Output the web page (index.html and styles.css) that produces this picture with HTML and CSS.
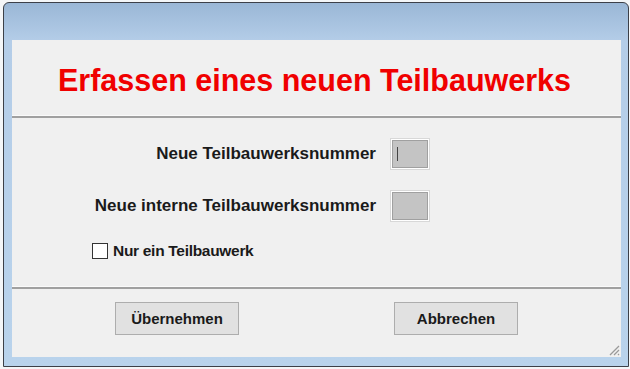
FILE: index.html
```html
<!DOCTYPE html>
<html lang="de">
<head>
  <meta charset="UTF-8" />
  <title>Erfassen eines neuen Teilbauwerks</title>
  <link rel="stylesheet" href="styles.css">
</head>
<body>
  <div class="window">
    <div class="client">
      <div class="header">
        <h1>Erfassen eines neuen Teilbauwerks</h1>
      </div>
      <div class="separator"></div>

      <div class="form">
        <div class="row">
          <label for="nr">Neue Teilbauwerksnummer</label>
          <div class="field"><input type="text" id="nr" /><span class="caret"></span></div>
        </div>
        <div class="row">
          <label for="intnr">Neue interne Teilbauwerksnummer</label>
          <div class="field"><input type="text" id="intnr" /></div>
        </div>
        <div class="check">
          <span class="box"></span>
          <span>Nur ein Teilbauwerk</span>
        </div>
      </div>

      <div class="separator"></div>
      <div class="buttons">
        <button class="btn">Übernehmen</button>
        <button class="btn">Abbrechen</button>
      </div>

      <svg class="grip" width="12" height="12" viewBox="0 0 12 12">
        <path d="M11 2 L2 11 M11 6 L6 11 M11 10 L10 11" stroke="#9a9a9a" stroke-width="1.3" />
      </svg>
    </div>
  </div>
</body>
</html>
```

FILE: styles.css
```css
body {
  margin: 0;
  background: #f4f6f8;
  font-family: 'Liberation Sans', Arial, sans-serif;
}
.window {
  margin: 2px 1px 0 3px;
  height: 365px;
  box-sizing: border-box;
  border: 1px solid #3c4048;
  border-radius: 6px 6px 0 0;
  background: linear-gradient(#9ab7d6, #b4cde8 38px, #b9d3ec);
  padding: 37px 7px 9px 8px;
}
.client {
  position: relative;
  height: 317px;
  background: #f0f0f0;
  display: flex;
  flex-direction: column;
}
.header {
  height: 75px;
  display: flex;
  align-items: center;
  justify-content: center;
}
h1 {
  margin: 0 0 0 -4px;
  color: #f00000;
  font-size: 30.5px;
  font-weight: bold;
  padding-top: 6px;
}
.separator {
  height: 2px;
  background: #a0a0a0;
  border-top: 1px solid #fafafa;
}
.form {
  height: 168px;
  box-sizing: border-box;
  padding-top: 20px;
}
.row {
  display: flex;
  justify-content: flex-end;
  align-items: center;
  width: 417px;
  height: 32px;
  margin-bottom: 20px;
}
.row label {
  font-size: 17px;
  font-weight: bold;
  color: #1a1a1a;
  margin-right: 15px;
}
.field {
  position: relative;
  width: 36px;
  height: 28px;
  border: 1px solid #fff;
  outline: 1px solid #d8d8d8;
}
.field input {
  box-sizing: border-box;
  width: 100%;
  height: 100%;
  margin: 0;
  border: 1px solid #a0a0a0;
  background: #c4c4c4;
}
.caret {
  position: absolute;
  left: 5px;
  top: 7px;
  width: 1px;
  height: 14px;
  background: #444;
}
.check {
  display: flex;
  align-items: center;
  margin: 6px 0 0 80px;
  font-size: 15.5px;
  font-weight: bold;
  color: #1a1a1a;
  letter-spacing: -0.3px;
}
.box {
  width: 14px;
  height: 14px;
  border: 1px solid #333;
  background: #fff;
  margin-right: 5px;
}
.buttons {
  display: flex;
  padding: 13px 0 0 103px;
  gap: 155px;
}
.btn {
  width: 124px;
  height: 33px;
  margin: 0;
  background: #e1e1e1;
  border: 1px solid #adadad;
  font-family: 'Liberation Sans', Arial, sans-serif;
  font-size: 15px;
  font-weight: bold;
  color: #1a1a1a;
}
.grip {
  position: absolute;
  right: 1px;
  bottom: 1px;
}
```
